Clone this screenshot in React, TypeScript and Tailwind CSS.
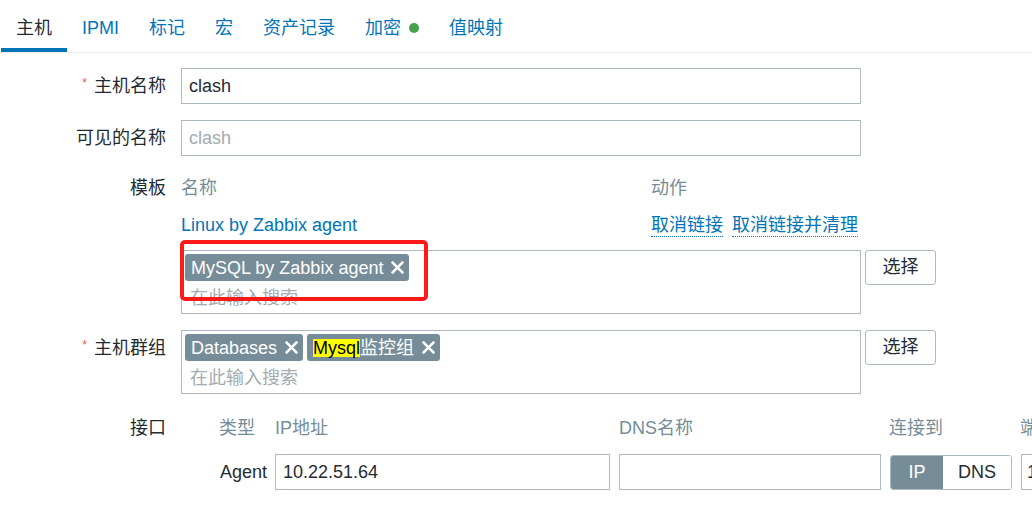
import React, { FC, ReactNode } from 'react';

const tabs = ['主机', 'IPMI', '标记', '宏', '资产记录', '加密', '值映射'];

const CloseIcon: FC = () => (
  <svg width="13" height="13" viewBox="0 0 12 12" className="shrink-0">
    <path d="M1.5 1.5 L10.5 10.5 M10.5 1.5 L1.5 10.5" stroke="white" strokeWidth="2.4" strokeLinecap="square" />
  </svg>
);

interface TagProps {
  children: ReactNode;
}

const Tag: FC<TagProps> = ({ children }) => (
  <div className="flex h-[27px] items-center gap-[8px] rounded-[3px] bg-[#768d99] pl-[6px] pr-[5px] text-white">
    <span className="leading-[20px]">{children}</span>
    <CloseIcon />
  </div>
);

interface RowProps {
  label: string;
  required?: boolean;
  labelHeight?: string;
  className?: string;
  children: ReactNode;
}

const Row: FC<RowProps> = ({ label, required, labelHeight = 'h-[36px]', className = '', children }) => (
  <div className={`flex items-start ${className}`}>
    <div className={`flex w-[166px] shrink-0 items-center justify-end ${labelHeight}`}>
      {required && <span className="mr-[7px] -mt-[6px] text-[12px] leading-none text-[#e45959]">*</span>}
      <span>{label}</span>
    </div>
    <div className="ml-[15px]">{children}</div>
  </div>
);

const MultiSelect: FC<{ children: ReactNode }> = ({ children }) => (
  <div className="flex items-start">
    <div className="flex h-[64px] w-[680px] flex-col border border-[#acbbc2] px-[3px] pt-[3px]">
      <div className="flex gap-[4px]">{children}</div>
      {/* search placeholder */}
      <div className="mt-[4px] flex h-[26px] items-center pl-[5px] text-[#a3acb1]">在此输入搜索</div>
    </div>
    <button className="ml-[4px] h-[35px] w-[71px] rounded-[3px] border border-[#acbbc2] bg-white text-[#1f2c33]">
      选择
    </button>
  </div>
);

const App: FC = () => {
  return (
    <div className="relative h-[510px] w-[1032px] overflow-hidden bg-white font-['Liberation_Sans','Noto_Sans_CJK_SC',sans-serif] text-[18px] text-[#1f2c33]">
      {/* Tabs */}
      <div className="flex h-[53px] border-b border-[#ebeef0] pl-px">
        {tabs.map((t, i) => (
          <div key={t} className="relative flex h-full items-center px-[15px] pt-[4px]">
            <span className={i === 0 ? 'text-[#1f2c33]' : 'text-[#0275b8]'}>{t}</span>
            {t === '加密' && <span className="ml-[8px] h-[10px] w-[10px] rounded-full bg-[#46a14a]" />}
            {i === 0 && <div className="absolute bottom-0 left-0 right-0 h-[4px] bg-[#0275b8]" />}
          </div>
        ))}
      </div>

      <div className="pt-[15px]">
        <Row label="主机名称" required>
          <div className="flex h-[36px] w-[680px] items-center border border-[#acbbc2] px-[7px]">clash</div>
        </Row>

        <Row label="可见的名称" className="mt-[16px]">
          <div className="flex h-[36px] w-[680px] items-center border border-[#acbbc2] px-[7px] text-[#a3acb1]">
            clash
          </div>
        </Row>

        {/* Templates */}
        <Row label="模板" labelHeight="h-[24px]" className="mt-[20px]">
          <div className="flex h-[24px] items-center text-[#768d99]">
            <span className="w-[470px]">名称</span>
            <span>动作</span>
          </div>
          <div className="mt-[13px] flex h-[24px] items-center text-[#0275b8]">
            <span className="w-[470px]">Linux by Zabbix agent</span>
            <span className="border-b border-dotted border-[#0275b8] leading-[22px]">取消链接</span>
            <span className="ml-[9px] border-b border-dotted border-[#0275b8] leading-[22px]">取消链接并清理</span>
          </div>
          <div className="mt-[13px]">
            <MultiSelect>
              <Tag>MySQL by Zabbix agent</Tag>
            </MultiSelect>
          </div>
        </Row>

        {/* Host groups */}
        <Row label="主机群组" required className="mt-[16px]">
          <MultiSelect>
            <Tag>Databases</Tag>
            <Tag>
              <span className="inline-block bg-[#ffff00] leading-[18px] text-black">Mysql</span>监控组
            </Tag>
          </MultiSelect>
        </Row>

        {/* Interfaces */}
        <Row label="接口" labelHeight="h-[24px]" className="mt-[22px]">
          <div className="ml-[38px]">
            <div className="flex h-[24px] items-center whitespace-nowrap text-[#768d99]">
              <span className="w-[56px] shrink-0">类型</span>
              <span className="w-[344px] shrink-0">IP地址</span>
              <span className="w-[270px] shrink-0">DNS名称</span>
              <span className="w-[131px] shrink-0">连接到</span>
              <span className="shrink-0">端口</span>
            </div>
            <div className="mt-[14px] flex items-center whitespace-nowrap">
              <span className="w-[56px] shrink-0 pr-[8px] text-right">Agent</span>
              <div className="flex h-[36px] w-[335px] shrink-0 items-center border border-[#acbbc2] px-[7px]">
                10.22.51.64
              </div>
              <div className="ml-[9px] h-[36px] w-[262px] shrink-0 border border-[#acbbc2]" />
              <div className="ml-[9px] flex h-[35px] w-[122px] shrink-0 overflow-hidden rounded-[3px] border border-[#acbbc2]">
                <div className="flex w-[52px] items-center justify-center bg-[#768d99] text-white">IP</div>
                <div className="flex flex-1 items-center justify-center bg-white">DNS</div>
              </div>
              <div className="ml-[9px] flex h-[36px] w-[100px] shrink-0 items-center border border-[#acbbc2] px-[5px]">
                10050
              </div>
            </div>
          </div>
        </Row>
      </div>

      {/* Red annotation box over the template selection */}
      <div className="absolute left-[180px] top-[240px] h-[61px] w-[248px] rounded-[5px] border-[4px] border-[#ff1a1a]" />
    </div>
  );
};

export default App;
